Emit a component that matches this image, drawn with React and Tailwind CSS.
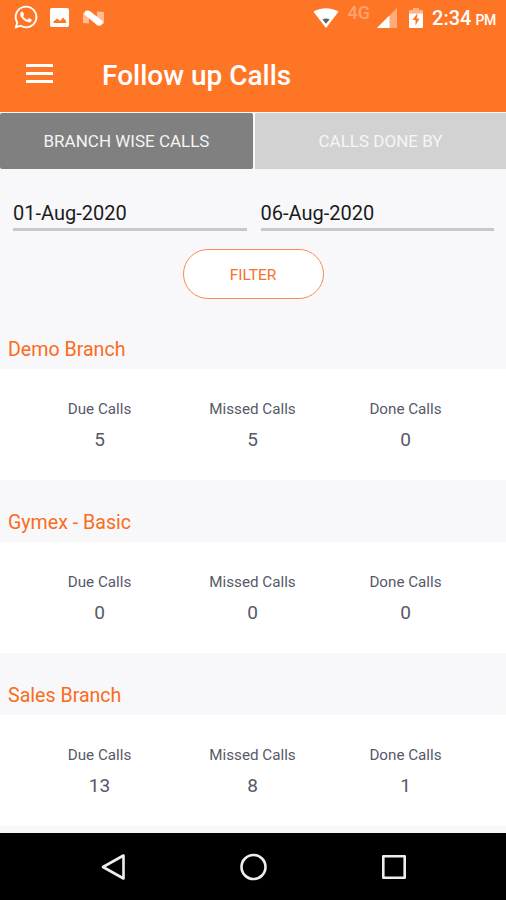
import React from 'react';
import { FaWhatsapp } from 'react-icons/fa';

const branches = [
  { name: 'Demo Branch', due: 5, missed: 5, done: 0 },
  { name: 'Gymex - Basic', due: 0, missed: 0, done: 0 },
  { name: 'Sales Branch', due: 13, missed: 8, done: 1 },
];

const StatusBar = () => (
  <div className="h-9 flex items-center justify-between pl-[14px] pr-[10px] text-white">
    <div className="flex items-center -mt-[2px]">
      <FaWhatsapp size={26} className="-ml-px" />
      <svg className="ml-[11px] mt-px" width="19" height="19" viewBox="0 0 19 19">
        <path
          fill="currentColor"
          fillRule="evenodd"
          d="M2 0h15a2 2 0 0 1 2 2v15a2 2 0 0 1-2 2H2a2 2 0 0 1-2-2V2a2 2 0 0 1 2-2ZM3.500 15h12.700v-2L13 9.500l-2.800 3.500L7 10.500 3.500 13.500Z"
        />
      </svg>
      <svg className="ml-[14px] mt-px" width="21" height="16" viewBox="0 0 21 16" fill="currentColor">
        <path opacity="0.5" d="M0 2.500 6 5v8.500L0 13ZM14 1.500l7 .5v12l-7-4Z" />
        <path d="M1.500 2Q3.500-0.500 7.500 1.500L20 11.500Q19.500 16.500 14.500 15.500L1.500 4.500Z" />
      </svg>
    </div>

    <div className="flex items-center">
      <svg className="-mt-px" width="26" height="20" viewBox="0 0 26 20">
        <path fill="#fff" d="M0.500 3.800C7.500-1 18.500-1 25.500 3.800L13 20Z" />
        <path fill="#546269" d="M9.400 11.300Q13 9.500 16.600 11.300L13 15.800Z" />
      </svg>
      <span className="ml-[9px] mb-[10px] text-[18px] leading-none font-medium text-white/35">4G</span>
      <svg className="ml-[7px]" width="20" height="20" viewBox="0 0 20 20" fill="#fff">
        <path opacity="0.4" d="M20 0v20H0Z" />
        <path d="M12.500 7.500V20H0Z" />
      </svg>
      <svg className="ml-[12px] -mt-px" width="14" height="20" viewBox="0 0 14 20">
        <path fill="#fff" opacity="0.45" d="M4 0h6v2h3q1 0 1 1v3H0V3q0-1 1-1h3Z" />
        <path fill="#fff" d="M0 5.500h14V19q0 1-1 1H1q-1 0-1-1Z" />
        <path fill="#ff7526" d="M8.500 5 3.500 12h3v5.500L10.500 10.500H7.800Z" />
      </svg>
      <span className="ml-[9px] text-[20px] leading-none font-medium">
        2:34<span className="ml-[4px] text-[14px] tracking-[-0.3px]">PM</span>
      </span>
    </div>
  </div>
);

const Header = () => (
  <div className="h-[76px] flex items-center pl-[26px] text-white">
    <div className="w-[27px] flex flex-col gap-[5px] -mt-px">
      <span className="h-[3px] bg-white" />
      <span className="h-[3px] bg-white" />
      <span className="h-[3px] bg-white" />
    </div>
    <h1 className="ml-[49px] mt-[3px] text-[28px] leading-8 font-medium">Follow up Calls</h1>
  </div>
);

const DateField = ({ value }) => (
  <div className="flex-1 h-[31px] border-b-[3px] border-[#c8c8c9] text-[20px] leading-[26px] text-[#1b1b1c]">
    {value}
  </div>
);

const Stat = ({ label, value }) => (
  <div className="flex flex-col items-center text-[#565969]">
    <span className="text-[15.2px] leading-5">{label}</span>
    <span className="mt-[11px] text-[19px] leading-5">{value}</span>
  </div>
);

const BranchCard = ({ branch }) => (
  <section>
    <h2 className="h-[62px] pt-[29px] pl-2 text-[19.6px] leading-7 text-[#f96c20]">{branch.name}</h2>
    <div className="h-[111px] bg-white pl-[23px] pr-[24px] pt-[30px] grid grid-cols-3">
      <Stat label="Due Calls" value={branch.due} />
      <Stat label="Missed Calls" value={branch.missed} />
      <Stat label="Done Calls" value={branch.done} />
    </div>
  </section>
);

const NavBar = () => (
  <div className="h-[67px] shrink-0 bg-black flex items-center justify-between pl-[100px] pr-[100px]">
    <svg width="26" height="28" viewBox="0 0 26 28" fill="none" stroke="#eee" strokeWidth="2.600" strokeLinejoin="round">
      <path d="M23.500 2.500v23L3 14Z" />
    </svg>
    <svg width="28" height="28" viewBox="0 0 28 28" fill="none" stroke="#eee" strokeWidth="2.600">
      <circle cx="13.500" cy="14" r="12" />
    </svg>
    <svg width="24" height="24" viewBox="0 0 24 24" fill="none" stroke="#eee" strokeWidth="2.600" strokeLinejoin="round">
      <rect x="1.300" y="1.300" width="21.400" height="21.400" />
    </svg>
  </div>
);

const App = () => {
  return (
    <div className="w-full h-[900px] overflow-hidden flex flex-col bg-[#f8f8fa] font-['Roboto',sans-serif]">
      <div className="h-28 shrink-0 bg-[#ff7526]">
        <StatusBar />
        <Header />
      </div>

      {/* Tabs */}
      <div className="h-[57px] shrink-0 pt-px flex gap-[2px] text-[17px]">
        <button className="w-[253px] pt-[2px] rounded-[2px] bg-[#808080] text-[#f4f4f4]">BRANCH WISE CALLS</button>
        <button className="flex-1 pt-[2px] bg-[#d2d2d2] text-[#f6f6f6]">CALLS DONE BY</button>
      </div>

      {/* Date range */}
      <div className="shrink-0 flex gap-[14px] pt-[31px] pl-[13px] pr-[12px]">
        <DateField value="01-Aug-2020" />
        <DateField value="06-Aug-2020" />
      </div>
      <div className="shrink-0 flex justify-center pt-[18px] pb-[8px]">
        <button className="w-[141px] h-[50px] pt-[3px] rounded-full border-[1.5px] border-[#fb8a57] bg-white text-[15.5px] text-[#f4722b]">
          FILTER
        </button>
      </div>

      {/* Branch list */}
      <div className="flex-1 min-h-0 overflow-hidden">
        {branches.map((branch) => (
          <BranchCard key={branch.name} branch={branch} />
        ))}
      </div>

      <NavBar />
    </div>
  );
};

export default App;
